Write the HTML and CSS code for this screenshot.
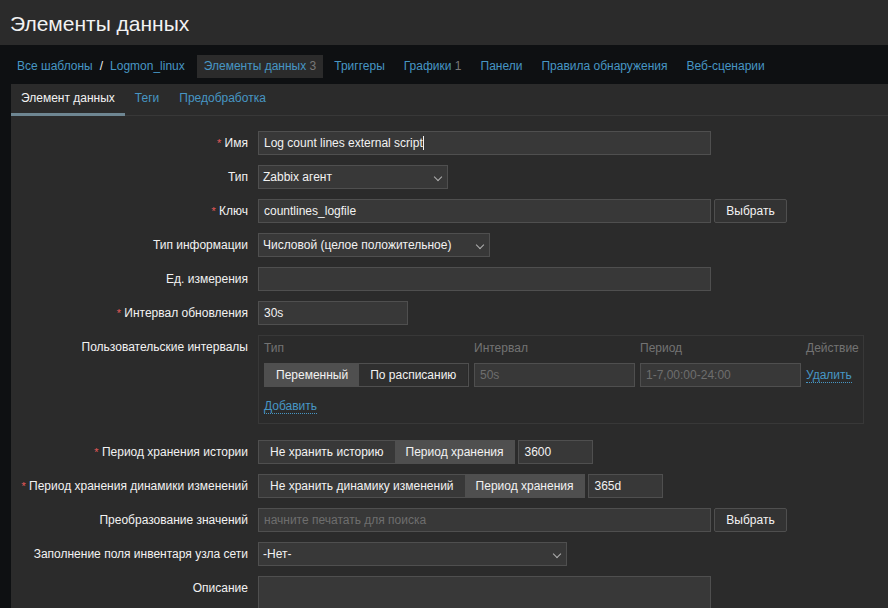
FILE: index.html
```html
<!DOCTYPE html>
<html lang="ru">
<head>
<meta charset="utf-8">
<title>Элементы данных</title>
<link rel="stylesheet" href="styles.css">
</head>
<body>
<header class="header"><h1 class="title">Элементы данных</h1></header>
<nav class="nav">
  <a class="nav-link" href="#">Все шаблоны</a>
  <span class="sep">/</span>
  <a class="nav-link" href="#">Logmon_linux</a>
  <span class="nav-item active">Элементы данных <span class="count">3</span></span>
  <a class="nav-item" href="#">Триггеры</a>
  <a class="nav-item" href="#">Графики <span class="count">1</span></a>
  <a class="nav-item" href="#">Панели</a>
  <a class="nav-item" href="#">Правила обнаружения</a>
  <a class="nav-item" href="#">Веб-сценарии</a>
</nav>
<div class="page">
  <div class="panel">
    <div class="tabs">
      <span class="tab active">Элемент данных</span>
      <a class="tab" href="#">Теги</a>
      <a class="tab" href="#">Предобработка</a>
    </div>
    <div class="form">
      <label class="lbl"><span class="req">*</span> Имя</label>
      <div class="ctl"><div class="input w-wide">Log count lines external script<span class="caret"></span></div></div>

      <label class="lbl">Тип</label>
      <div class="ctl"><div class="select w-type">Zabbix агент<span class="chev"></span></div></div>

      <label class="lbl"><span class="req">*</span> Ключ</label>
      <div class="ctl"><div class="input w-wide">countlines_logfile</div><button class="btn">Выбрать</button></div>

      <label class="lbl">Тип информации</label>
      <div class="ctl"><div class="select w-info">Числовой (целое положительное)<span class="chev"></span></div></div>

      <label class="lbl">Ед. измерения</label>
      <div class="ctl"><div class="input w-wide"></div></div>

      <label class="lbl"><span class="req">*</span> Интервал обновления</label>
      <div class="ctl"><div class="input w-delay">30s</div></div>

      <label class="lbl">Пользовательские интервалы</label>
      <div class="ctl">
        <div class="intervals">
          <div class="iv-grid">
            <span class="th">Тип</span>
            <span class="th">Интервал</span>
            <span class="th">Период</span>
            <span class="th">Действие</span>
            <div class="seg">
              <span class="seg-item on">Переменный</span>
              <span class="seg-item">По расписанию</span>
            </div>
            <div class="input dis">50s</div>
            <div class="input dis">1-7,00:00-24:00</div>
            <a class="dlink" href="#">Удалить</a>
          </div>
          <a class="dlink add" href="#">Добавить</a>
        </div>
      </div>

      <label class="lbl"><span class="req">*</span> Период хранения истории</label>
      <div class="ctl">
        <div class="seg">
          <span class="seg-item">Не хранить историю</span>
          <span class="seg-item on">Период хранения</span>
        </div>
        <div class="input w-small">3600</div>
      </div>

      <label class="lbl"><span class="req">*</span> Период хранения динамики изменений</label>
      <div class="ctl">
        <div class="seg">
          <span class="seg-item">Не хранить динамику изменений</span>
          <span class="seg-item on">Период хранения</span>
        </div>
        <div class="input w-small">365d</div>
      </div>

      <label class="lbl">Преобразование значений</label>
      <div class="ctl"><div class="input w-wide ph">начните печатать для поиска</div><button class="btn">Выбрать</button></div>

      <label class="lbl">Заполнение поля инвентаря узла сети</label>
      <div class="ctl"><div class="select w-inv">-Нет-<span class="chev"></span></div></div>

      <label class="lbl">Описание</label>
      <div class="ctl"><div class="textarea w-wide"></div></div>
    </div>
  </div>
</div>
</body>
</html>
```

FILE: styles.css
```css
html, body {
  margin: 0;
  padding: 0;
  height: 100%;
  overflow: hidden;
}
body {
  background: #0e1012;
  font-family: "Liberation Sans", Arial, sans-serif;
  font-size: 12px;
  color: #f2f2f2;
  display: flex;
  flex-direction: column;
}
a { text-decoration: none; }

.header {
  background: #2b2b2b;
  height: 45px;
  display: flex;
  align-items: center;
  padding-left: 10px;
  flex-shrink: 0;
}
.title {
  margin: 0;
  font-weight: normal;
  font-size: 21px;
  color: #f2f2f2;
  line-height: 24px;
  padding-top: 2px;
}

.nav {
  height: 39px;
  box-sizing: border-box;
  padding: 10px 0 6px 10px;
  display: flex;
  align-items: stretch;
  flex-shrink: 0;
}
.nav-link, .nav-item {
  color: #4796c4;
  padding: 0 7px;
  line-height: 23px;
}
.sep {
  color: #f2f2f2;
  line-height: 23px;
}
.nav-item { margin-left: 5px; }
.nav-item.active {
  background: #2b2b2b;
  color: #4796c4;
  margin-left: 5px;
}
.nav-item.active + .nav-item { margin-left: 4px; }
.count { color: #787878; }

.page {
  flex: 1;
  padding-left: 11px;
  min-height: 0;
}
.panel {
  background: #2b2b2b;
  height: 100%;
}

.tabs {
  display: flex;
  height: 32px;
  box-sizing: border-box;
  border-bottom: 1px solid #383838;
}
.tab {
  color: #4796c4;
  padding: 0 10px;
  line-height: 29px;
  height: 31px;
  box-sizing: border-box;
}
.tab.active {
  color: #f2f2f2;
  border-bottom: 3px solid #6e8692;
  height: 32px;
}

.form {
  display: grid;
  grid-template-columns: 237px 1fr;
  column-gap: 10px;
  row-gap: 10px;
  padding-top: 15px;
}
.lbl {
  text-align: right;
  line-height: 24px;
  color: #f2f2f2;
  white-space: nowrap;
}
.req {
  color: #e45959;
  font-size: 11px;
}
.ctl {
  display: flex;
  align-items: flex-start;
  gap: 3px;
}

.input, .select, .textarea {
  box-sizing: border-box;
  height: 24px;
  background: #383838;
  border: 1px solid #4f4f4f;
  color: #f2f2f2;
  line-height: 22px;
  padding: 0 5px;
  white-space: nowrap;
  overflow: hidden;
}
.select {
  position: relative;
  padding-left: 4px;
}
.chev {
  position: absolute;
  right: 6px;
  top: 8px;
  width: 5px;
  height: 5px;
  border-right: 1.5px solid #b0b0b0;
  border-bottom: 1.5px solid #b0b0b0;
  transform: rotate(45deg);
}
.caret {
  display: inline-block;
  width: 1px;
  height: 14px;
  background: #f2f2f2;
  vertical-align: -3px;
}
.w-wide { width: 453px; }
.w-type { width: 190px; }
.w-info { width: 232px; }
.w-delay { width: 150px; }
.w-small { width: 75px; }
.w-inv { width: 309px; }
.textarea { height: 50px; }
.ph { color: #6e6e6e; }
.dis { color: #6e6e6e; }

.btn {
  box-sizing: border-box;
  height: 24px;
  width: 73px;
  background: #333333;
  border: 1px solid #4f4f4f;
  color: #f2f2f2;
  font-family: inherit;
  font-size: 12px;
  padding: 0;
  border-radius: 2px;
}

.intervals {
  box-sizing: border-box;
  width: 606px;
  height: 89px;
  border: 1px solid #383838;
  padding: 5px 5px 0 5px;
  margin-bottom: 6px;
}
.iv-grid {
  display: grid;
  grid-template-columns: 205px 161px 161px 1fr;
  column-gap: 5px;
  row-gap: 8px;
  align-items: center;
}
.th {
  color: #737373;
  line-height: 14px;
}
.th:last-of-type { text-align: right; }
.dlink {
  color: #4796c4;
  border-bottom: 1px dotted #4796c4;
  justify-self: start;
  line-height: 14px;
}
.add {
  display: inline-block;
  margin-top: 12px;
}

.seg {
  display: flex;
  height: 24px;
  box-sizing: border-box;
  border: 1px solid #4f4f4f;
}
.seg-item {
  background: #383838;
  color: #f2f2f2;
  line-height: 22px;
  padding: 0 11px;
  white-space: nowrap;
}
.seg-item.on {
  background: #4f4f4f;
}
.iv-grid .seg-item { background: #2f2f2f; }
.iv-grid .seg-item.on { background: #4f4f4f; }
```
